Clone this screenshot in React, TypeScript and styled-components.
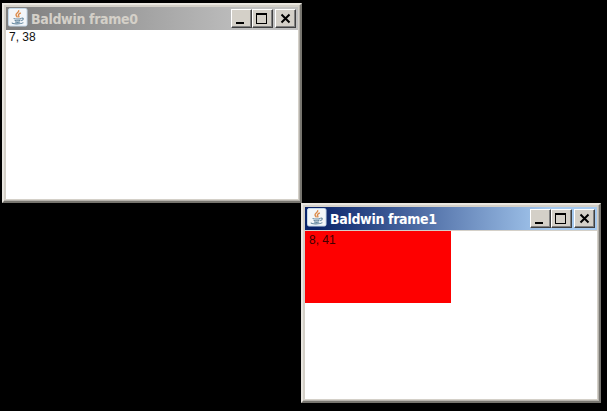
import React from "react";
import styled, { createGlobalStyle } from "styled-components";

const GlobalStyle = createGlobalStyle`
  body { margin: 0; background: #000; overflow: hidden; }
`;

const Desktop = styled.main`
  position: relative;
  width: 607px;
  height: 411px;
  background: #000;
`;

const Frame = styled.section<{ $x: number; $y: number }>`
  position: absolute;
  left: ${(p) => p.$x}px;
  top: ${(p) => p.$y}px;
  box-sizing: border-box;
  width: 300px;
  height: 200px;
  padding: 2px;
  display: flex;
  flex-direction: column;
  border: 2px solid;
  border-color: #e9e6e0 #77756f #77756f #e9e6e0;
  background: #d4d0c8;
  box-shadow: inset -1px -1px #b5b2ac;
`;

const TitleBar = styled.header<{ $active: boolean }>`
  height: ${(p) => (p.$active ? 24 : 23)}px;
  flex: none;
  box-sizing: border-box;
  padding: 0 2px;
  display: flex;
  align-items: center;
  background: ${(p) =>
    p.$active
      ? "linear-gradient(90deg, #0a246a 4%, #a6caf0 84%)"
      : "linear-gradient(90deg, #808080 4%, #c0c0c0 84%)"};
  border-bottom: ${(p) => (p.$active ? "1px solid #d4d0c8" : "0")};
`;

const Title = styled.h1<{ $active: boolean }>`
  flex: 1;
  margin: 0 0 0 3px;
  font: bold 14px/20px "DejaVu Sans Condensed", "DejaVu Sans", sans-serif;
  font-stretch: condensed;
  letter-spacing: -0.33px;
  white-space: nowrap;
  color: ${(p) => (p.$active ? "#fff" : "#d4d0c8")};
`;

const Controls = styled.div`
  display: flex;
`;

const ControlButton = styled.button<{ $gap?: boolean }>`
  width: 21px;
  height: 19px;
  box-sizing: border-box;
  margin: 0 0 0 ${(p) => (p.$gap ? 2 : 0)}px;
  padding: 0;
  display: flex;
  border: 1px solid;
  border-color: #fff #404040 #404040 #fff;
  box-shadow: inset -1px -1px #808080;
  background: #d4d0c8;
`;

const Client = styled.div`
  flex: 1;
  position: relative;
  background: #fff;
`;

const RedPanel = styled.div`
  width: 146px;
  height: 72px;
  background: #fe0000;
`;

const Coordinates = styled.span<{ $x: number; $y: number }>`
  position: absolute;
  left: ${(p) => p.$x}px;
  top: ${(p) => p.$y}px;
  font: 12px/14px "Liberation Sans", Arial, sans-serif;
  color: ${(p) => (p.$x > 3 ? "#400000" : "#111")};
`;

const IconBox = styled.span`
  width: 20px;
  height: 21px;
  display: flex;
`;

function JavaIcon() {
  return (
    <IconBox>
      <svg width="20" height="19" viewBox="0 0 20 19" fill="none">
        <rect x="0.5" y="0.5" width="18.5" height="17.5" rx="1.5" fill="#f3f6f9" stroke="#c5d9ea" />
        <path d="M10.6 2.2c1.3 2-3.5 3-2.5 5.1.3.9 1.2 1.4 1.4 2.1M12.8 4.9c-2 1-3 1.8-2.1 3 .5.7.4 1-.2 1.5" stroke="#dc8a48" strokeWidth="1.4" />
        <path d="M5.6 10.3c1 .9 6 .8 7.6.1M6.6 12.3c1.5.6 4.3.6 5.8 0M7 14c1.4.5 3.8.5 5.2 0M13.4 10.2c2.7-.5 2.4 1.8-.2 2.4M4.4 14.6c-1.8 1.5 8.4 2 11 0" stroke="#64879f" strokeWidth="1.1" />
      </svg>
    </IconBox>
  );
}

function ControlGlyph({ kind }: { kind: "min" | "max" | "close" }) {
  return (
    <svg width="19" height="17" viewBox="0 0 19 17" fill="none">
      {kind === "min" && <rect x="4" y="12" width="8" height="2" fill="#000" />}
      {kind === "max" && <path d="M3 3h11v11H3zM4 5v8h9V5z" fill="#000" fillRule="evenodd" />}
      {kind === "close" && <path d="M5.5 4.5l8 8M13.5 4.5l-8 8" stroke="#000" strokeWidth="2" />}
    </svg>
  );
}

interface JavaFrameProps {
  x: number;
  y: number;
  title: string;
  active?: boolean;
  children: React.ReactNode;
}

function JavaFrame({ x, y, title, active = false, children }: JavaFrameProps) {
  return (
    <Frame $x={x} $y={y}>
      <TitleBar $active={active}>
        <JavaIcon />
        <Title $active={active}>{title}</Title>
        <Controls>
          <ControlButton aria-label="Minimize"><ControlGlyph kind="min" /></ControlButton>
          <ControlButton aria-label="Maximize"><ControlGlyph kind="max" /></ControlButton>
          <ControlButton aria-label="Close" $gap><ControlGlyph kind="close" /></ControlButton>
        </Controls>
      </TitleBar>
      <Client>{children}</Client>
    </Frame>
  );
}

export default function App() {
  return (
    <>
      <GlobalStyle />
      <Desktop>
        <JavaFrame x={2} y={3} title="Baldwin frame0">
          <Coordinates $x={3} $y={0}>7, 38</Coordinates>
        </JavaFrame>
        <JavaFrame x={301} y={203} title="Baldwin frame1" active>
          <RedPanel />
          <Coordinates $x={4} $y={2}>8, 41</Coordinates>
        </JavaFrame>
      </Desktop>
    </>
  );
}
